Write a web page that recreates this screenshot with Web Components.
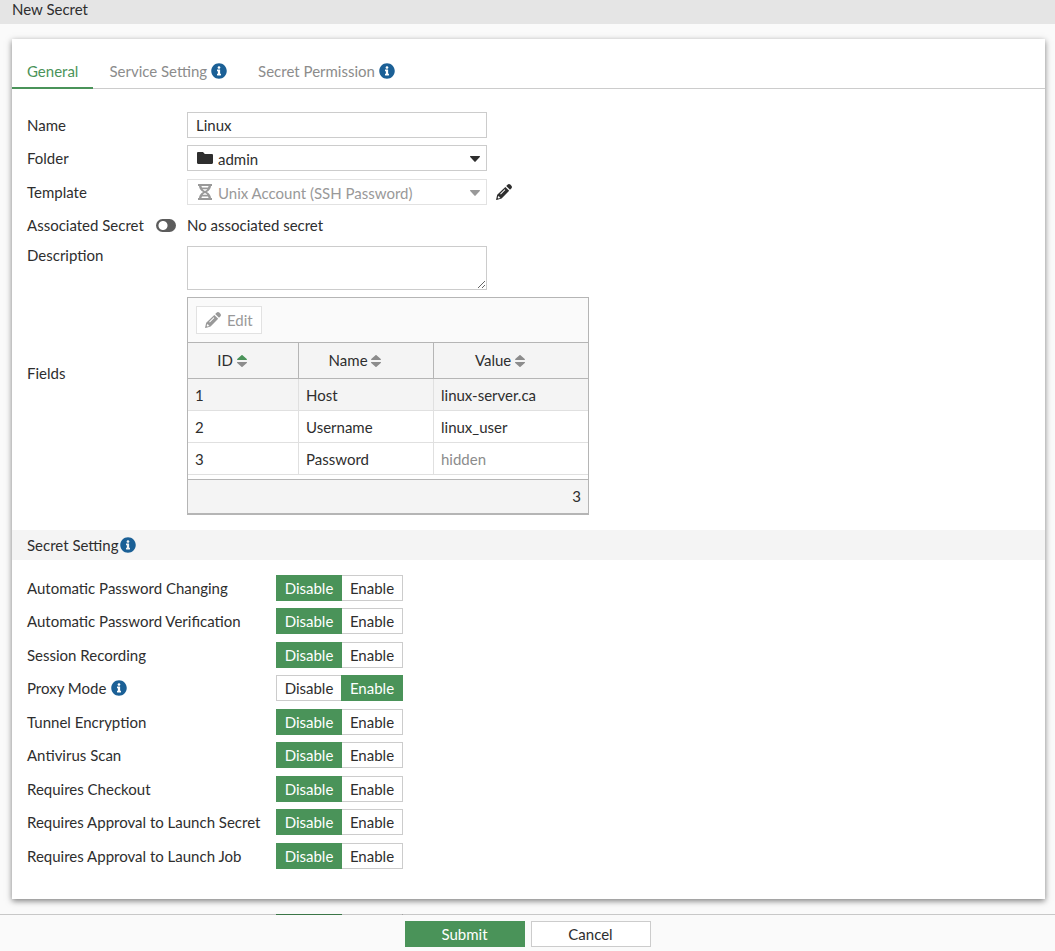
<!DOCTYPE html>
<html lang="en">
<head>
<meta charset="utf-8">
<meta name="viewport" content="width=device-width, initial-scale=1">
<title>New Secret</title>
<style>
  html, body { margin: 0; }
  body {
    --green: #4a9359;
    --text: #2e2e2e;
    --muted: #8c8c8c;
    --line: #ccc;
    --grid-line: #b5b5b5;
    --panel: #f4f4f4;
    --page: #fafafa;
    --info: #1b6096;
    background: var(--page);
    color: var(--text);
    font: 15px/20px Lato, "Open Sans", sans-serif;
  }
</style>
</head>
<body>
<secret-page></secret-page>

<script>
const define = (name, markup, setup) => {
  const template = document.createElement('template');
  template.innerHTML = markup;
  customElements.define(name, class extends HTMLElement {
    connectedCallback() {
      if (this.shadowRoot) return;
      const root = this.attachShadow({ mode: 'open' });
      root.append(template.content.cloneNode(true));
      if (setup) setup(this, root);
    }
  });
};

const icons = {
  info: ['0 0 512 512', '<path d="M256 8C119 8 8 119 8 256s111 248 248 248 248-111 248-248S393 8 256 8zm0 92c26 0 44 18 44 44s-18 42-44 42-44-16-44-42 18-44 44-44zm64 286c0 8-4 12-12 12h-104c-8 0-12-4-12-12v-32c0-8 4-12 12-12h16v-76h-16c-8 0-12-4-12-12v-32c0-8 4-12 12-12h76c8 0 12 4 12 12v120h16c8 0 12 4 12 12z"/>'],
  folder: ['0 0 16 16', '<path d="M1.2 2H6l1.8 2h7c.7 0 1.2.5 1.2 1.2v7.600c0 .7-.5 1.200-1.200 1.200H1.200C.5 14 0 13.500 0 12.800V3.200C0 2.500.5 2 1.200 2z"/>'],
  template: ['0 0 16 16', '<path fill-rule="evenodd" d="M1 0h14v2h-1c-.2 2.700-1.900 4.700-4.200 6 2.300 1.300 4 3.300 4.200 6h1v2H1v-2h1c.2-2.700 1.900-4.700 4.200-6C3.900 6.700 2.200 4.700 2 2H1zM5 3.500h6l.6-1.500H4.400zM8 7c1-.5 1.800-1 2.400-1.700H5.600C6.200 6 7 6.500 8 7zM8 9c-1 .5-1.800 1-2.400 1.700h4.800C9.800 10 9 9.500 8 9zM5 12.500 4.400 14h7.200l-.6-1.500z"/>'],
  pencil: ['0 0 16 16', '<path fill-rule="evenodd" d="M9.300 2.900l3.900 3.800-7.600 7.800-5 1.400c-.3.100-.6-.2-.5-.5L1.200 10.800zM2.200 12.200l-.5 1.700.7.700 1.700-.5v-.9H3.200v-1zM8.700 5.300 4.200 9.800l.6.600 4.500-4.500zM10.200 2l1.300-1.300c.9-.9 2-.9 2.800-.1l1.100 1.100c.8.800.8 1.900-.1 2.800l-1.300 1.300z"/>'],
  caret: ['0 0 10 6', '<path d="M.6 0h8.800c.6 0 .8.600.4 1L5.600 5.600c-.3.400-.9.400-1.200 0L.2 1C-.2.600 0 0 .6 0z"/>'],
  sort: ['0 0 10 12', '<path class="up" d="M.6 5h8.800c.6 0 .8-.5.4-.9L5.500.2c-.3-.3-.7-.3-1 0L.2 4.100c-.4.400-.2.900.4.900z"/><path d="M.6 7h8.800c.6 0 .8.500.4.900L5.500 11.800c-.3.300-.7.300-1 0L.2 7.900c-.4-.4-.2-.9.400-.9z"/>']
};

define('ui-icon', `
  <style>
    :host { display: inline-block; flex: none; width: 16px; height: 16px; }
    :host([name="info"]) { color: var(--info); }
    :host([name="caret"]) { width: 10px; height: 6px; }
    :host([name="sort"]) { width: 10px; height: 12px; color: var(--muted); }
    :host([active]) .up { fill: var(--green); }
    svg { display: block; width: 100%; height: 100%; fill: currentColor; }
  </style>
  <svg aria-hidden="true"></svg>`, (host, root) => {
  const [box, shape] = icons[host.getAttribute('name')];
  const svg = root.querySelector('svg');
  svg.setAttribute('viewBox', box);
  svg.innerHTML = shape;
});

define('page-header', `
  <style>
    :host { display: block; background: #e5e5e5; padding: 0 12px 6px; line-height: 18px; }
    h1 { margin: 0; font: inherit; }
  </style>
  <h1><slot></slot></h1>`);

define('tab-bar', `
  <style>
    :host { display: block; border-bottom: 1px solid var(--line); }
    nav { display: flex; gap: 1px; margin-bottom: -1px; }
    a {
      display: flex; align-items: center; gap: 4px;
      padding: 22px 15px 6px; height: 20px;
      border-bottom: 2px solid transparent;
      color: var(--muted); text-decoration: none;
    }
    a[aria-current] { color: var(--green); border-color: var(--green); }
  </style>
  <nav aria-label="Secret">
    <a href="#general" aria-current="page">General</a>
    <a href="#service">Service Setting <ui-icon name="info"></ui-icon></a>
    <a href="#permission">Secret Permission <ui-icon name="info"></ui-icon></a>
  </nav>`);

define('form-row', `
  <style>
    :host { display: grid; grid-template-columns: 160px minmax(0, 1fr); align-items: start; line-height: 26px; }
    .label { display: flex; align-items: center; justify-content: space-between; padding-right: 11px; }
    .control { display: flex; align-items: center; gap: 9px; min-width: 0; }
    :host([picker]) { min-height: 27px; }
    :host([plain]) { min-height: 26px; line-height: 24px; }
    :host([tall]) .label { line-height: 18px; }
    :host([grid]) .label { padding-top: 63px; }
  </style>
  <div class="label"><slot name="label"></slot></div>
  <div class="control"><slot></slot></div>`);

define('drop-down', `
  <style>
    :host { display: block; position: relative; width: 300px; max-width: 100%; }
    ::slotted(select) {
      display: block; box-sizing: border-box; width: 100%; height: 26px; margin: 0;
      appearance: none; border: 1px solid var(--line); border-radius: 0;
      padding: 0 24px 2px 30px; background: #fff; color: inherit; font: inherit; opacity: 1;
    }
    :host([muted]) { color: #999; }
    :host([muted]) ::slotted(select) { border-color: #e2e2e2; }
    .lead, .caret { position: absolute; pointer-events: none; }
    .lead { left: 10px; top: 5px; }
    .caret { right: 7px; top: 11px; }
  </style>
  <slot></slot>
  <ui-icon class="caret" name="caret"></ui-icon>`, (host, root) => {
  const lead = document.createElement('ui-icon');
  lead.className = 'lead';
  lead.setAttribute('name', host.getAttribute('icon'));
  root.append(lead);
});

define('fields-table', `
  <style>
    :host {
      display: block; box-sizing: border-box; width: 402px; line-height: 20px;
      border: 1px solid var(--grid-line); border-bottom-width: 2px;
    }
    .tools { padding: 8px; background: var(--page); }
    button {
      display: flex; align-items: center; gap: 6px; height: 28px; padding: 0 8px; margin: 0;
      border: 1px solid #e2e2e2; background: #fff; color: #999; font: inherit;
    }
    table { width: 100%; border-collapse: separate; border-spacing: 0; table-layout: fixed; margin-bottom: 4px; }
    th {
      height: 33px; padding: 0 22px 2px 0; font-weight: 400; background: var(--panel);
      border: solid var(--grid-line); border-width: 1px 1px 1px 0;
    }
    th ui-icon { vertical-align: -1px; }
    td { height: 31px; padding: 0 7px; border: solid #e0e0e0; border-width: 0 1px 1px 0; }
    th:last-child, td:last-child { border-right: 0; }
    th:nth-child(1) { width: 88px; }
    th:nth-child(2) { width: 112px; }
    tbody tr:first-child { background: var(--panel); }
    .hidden { color: var(--muted); }
    .count { padding: 6px 7px 7px; text-align: right; background: var(--panel); border-top: 1px solid var(--grid-line); }
  </style>
  <div class="tools"><button type="button" disabled><ui-icon name="pencil"></ui-icon>Edit</button></div>
  <table aria-label="Fields">
    <thead><tr>
      <th scope="col" aria-sort="ascending">ID <ui-icon name="sort" active></ui-icon></th>
      <th scope="col">Name <ui-icon name="sort"></ui-icon></th>
      <th scope="col">Value <ui-icon name="sort"></ui-icon></th>
    </tr></thead>
    <tbody>
      <tr><td>1</td><td>Host</td><td>linux-server.ca</td></tr>
      <tr><td>2</td><td>Username</td><td>linux_user</td></tr>
      <tr><td>3</td><td>Password</td><td class="hidden">hidden</td></tr>
    </tbody>
  </table>
  <div class="count">3</div>`);

define('general-form', `
  <style>
    :host { display: flex; flex-direction: column; gap: 7px; padding: 23px 15px 15px; }
    .text {
      box-sizing: border-box; width: 300px; max-width: 100%; height: 26px; margin: 0; padding: 0 8px;
      border: 1px solid var(--line); border-radius: 0; background: #fff; color: inherit; font: inherit;
    }
    textarea.text { display: block; height: 44px; resize: vertical; }
    .switch {
      appearance: none; width: 20px; height: 13px; margin: 0; border-radius: 7px;
      background: radial-gradient(circle at 7px 50%, #fff 4px, #5c5c5c 5px);
    }
    .edit { display: flex; padding: 0; border: 0; background: none; color: inherit; }
  </style>
  <form-row><label slot="label" for="name">Name</label><input class="text" id="name" value="Linux"></form-row>
  <form-row picker>
    <label slot="label" for="folder">Folder</label>
    <drop-down icon="folder"><select id="folder"><option>admin</option></select></drop-down>
  </form-row>
  <form-row picker>
    <label slot="label" for="template">Template</label>
    <drop-down icon="template" muted><select id="template" disabled><option>Unix Account (SSH Password)</option></select></drop-down>
    <button class="edit" type="button" aria-label="Edit template"><ui-icon name="pencil"></ui-icon></button>
  </form-row>
  <form-row plain>
    <label slot="label" for="associated">Associated Secret</label>
    <input slot="label" class="switch" type="checkbox" id="associated">
    <span>No associated secret</span>
  </form-row>
  <form-row tall><label slot="label" for="description">Description</label><textarea class="text" id="description"></textarea></form-row>
  <form-row grid><span slot="label">Fields</span><fields-table></fields-table></form-row>`);

define('section-title', `
  <style>
    :host { display: block; background: var(--panel); padding: 5px 15px; }
    h2 { display: flex; align-items: center; gap: 1px; margin: 0; font: inherit; }
  </style>
  <h2><slot></slot><ui-icon name="info"></ui-icon></h2>`);

define('setting-row', `
  <style>
    :host { display: block; line-height: 26px; }
    .row { display: grid; grid-template-columns: 249px minmax(0, 1fr); }
    .title { display: flex; align-items: center; gap: 5px; }
    .options { display: grid; grid-template-columns: 66px 61px; line-height: 24px; text-align: center; }
    label { position: relative; border: 1px solid var(--line); background: #fff; }
    label + label { margin-left: -1px; }
    label:has(:checked) { z-index: 1; color: #fff; background: var(--green); border-color: var(--green); }
    input { position: absolute; inset: 0; width: 100%; height: 100%; margin: 0; opacity: 0; }
  </style>
  <div class="row" role="radiogroup" aria-labelledby="title">
    <div class="title" id="title"><slot></slot></div>
    <div class="options">
      <label><input type="radio" name="state" value="disable">Disable</label>
      <label><input type="radio" name="state" value="enable">Enable</label>
    </div>
  </div>`, (host, root) => {
  root.querySelector(host.hasAttribute('enabled') ? '[value=enable]' : '[value=disable]').checked = true;
});

define('secret-settings', `
  <style>
    :host { display: flex; flex-direction: column; gap: 7px; padding: 15px 15px 30px; }
    setting-row:nth-of-type(even) { min-height: 27px; }
  </style>
  <setting-row>Automatic Password Changing</setting-row>
  <setting-row>Automatic Password Verification</setting-row>
  <setting-row>Session Recording</setting-row>
  <setting-row enabled>Proxy Mode <ui-icon name="info"></ui-icon></setting-row>
  <setting-row>Tunnel Encryption</setting-row>
  <setting-row>Antivirus Scan</setting-row>
  <setting-row>Requires Checkout</setting-row>
  <setting-row>Requires Approval to Launch Secret</setting-row>
  <setting-row>Requires Approval to Launch Job</setting-row>`);

define('action-bar', `
  <style>
    :host {
      display: flex; justify-content: center; gap: 6px; position: sticky; bottom: 0; z-index: 2;
      padding: 6px 0 4px; background: var(--page); border-top: 1px solid #c8c8c8;
    }
    /* edge of the next settings row showing through the divider */
    :host::before {
      content: ""; position: absolute; left: 276px; top: -1px; width: 127px; height: 1px;
      background: linear-gradient(90deg, #3b7647 66px, #c8c8c8 66px 126px, #a3a3a3 126px);
    }
    button {
      width: 120px; height: 26px; margin: 0; padding: 0;
      border: 1px solid var(--line); background: #fff; color: inherit; font: inherit;
    }
    .primary { background: var(--green); border-color: var(--green); color: #fff; }
  </style>
  <button class="primary" type="submit">Submit</button>
  <button type="button">Cancel</button>`);

define('secret-page', `
  <style>
    :host { display: flex; flex-direction: column; min-height: 100vh; }
    main { flex: 1; padding: 15px 10px 15px 12px; }
    .card { background: #fff; box-shadow: 0 2px 6px rgba(0, 0, 0, .5); }
  </style>
  <page-header>New Secret</page-header>
  <main>
    <div class="card">
      <tab-bar></tab-bar>
      <general-form></general-form>
      <section-title>Secret Setting</section-title>
      <secret-settings></secret-settings>
    </div>
  </main>
  <action-bar></action-bar>`);
</script>
</body>
</html>
